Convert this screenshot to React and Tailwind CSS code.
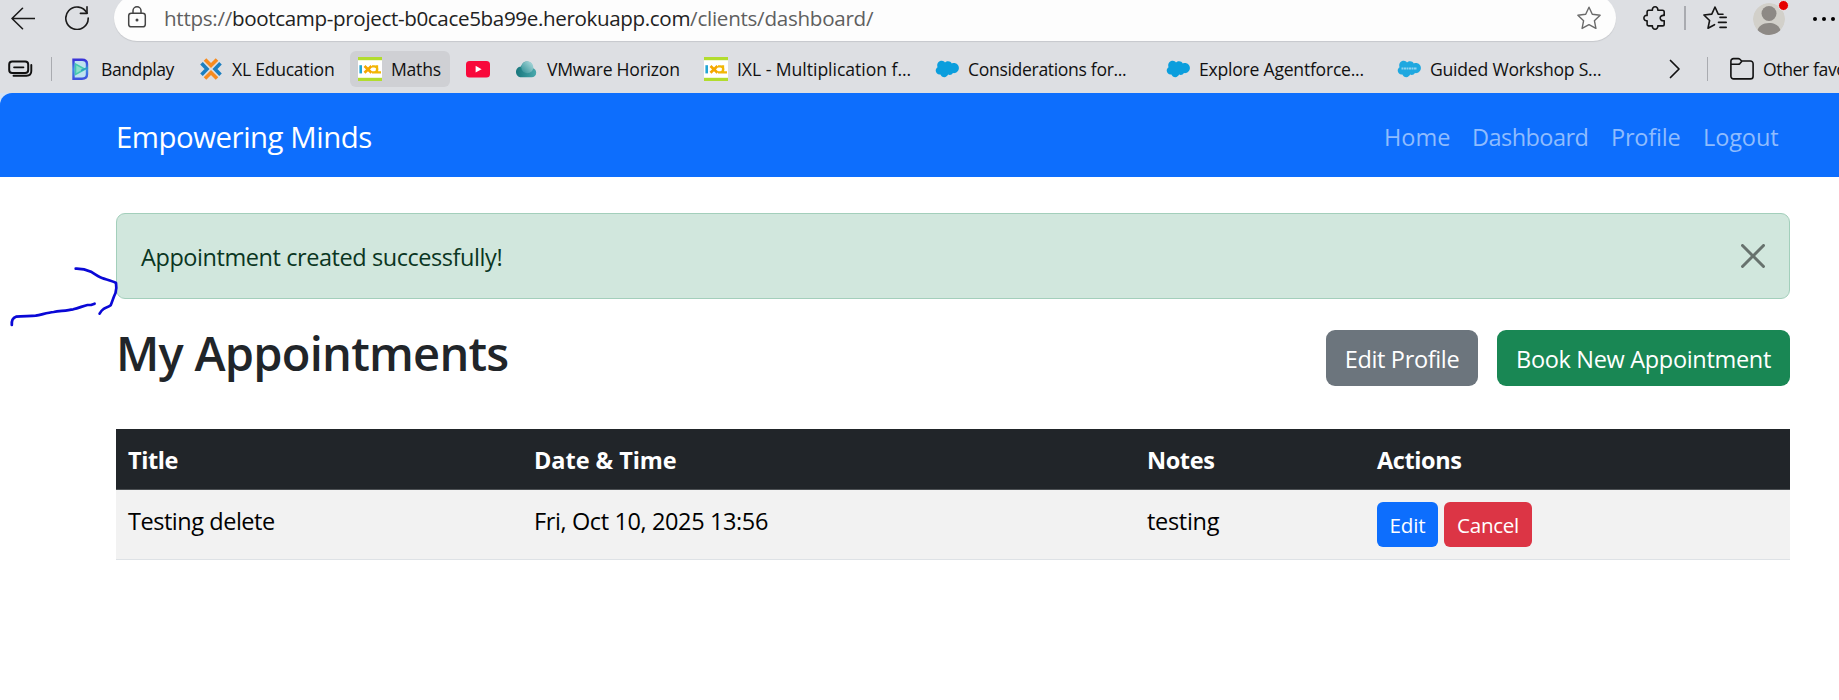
import React from "react";

function BackIcon() {
  return (
    <svg className="h-6 w-6" viewBox="0 0 24 24" fill="none" stroke="#1b1b1b" strokeWidth="1.6" strokeLinecap="round" strokeLinejoin="round">
      <path d="M11.500 2.300 1 12.500l10.500 10.200M1 12.500h22.500" />
    </svg>
  );
}

function ReloadIcon() {
  return (
    <svg className="h-6 w-6" viewBox="0 0 24 24" fill="none" stroke="#1b1b1b" strokeWidth="1.6" strokeLinecap="round" strokeLinejoin="round">
      <path d="M22 7.200A11.200 11.200 0 1 0 23.200 12" />
      <path d="M22 .8v6.600h-6.600" />
    </svg>
  );
}

function LockIcon() {
  return (
    <svg className="h-[22px] w-[20px]" viewBox="0 0 20 22" fill="none" stroke="#444" strokeWidth="1.5" strokeLinecap="round">
      <rect x="1.700" y="7.200" width="16.600" height="13.600" rx="2.600" />
      <path d="M6 7V4.800a4 4 0 0 1 8 0V7" />
      <circle cx="10" cy="14" r="1.500" fill="#444" stroke="none" />
    </svg>
  );
}

function StarIcon() {
  return (
    <svg className="h-6 w-6" viewBox="0 0 24 24" fill="none" stroke="#6a6a6a" strokeWidth="1.4" strokeLinejoin="round">
      <path d="M12 1.200 15.300 8.300l7.800 1-5.700 5.400 1.500 7.700L12 18.600l-6.900 3.800 1.500-7.700L.9 9.300l7.800-1z" />
    </svg>
  );
}

function ExtensionsIcon() {
  return (
    <svg className="h-6 w-6" viewBox="0 0 24 24" fill="none" stroke="#151515" strokeWidth="1.6" strokeLinejoin="round">
      <path d="M5.800 4.200h3.600C9.200 2.200 10.400.8 12.100.8s2.900 1.400 2.700 3.400h4.700a1.700 1.700 0 0 1 1.700 1.700v3.600c-2.500-.4-4 .8-4 2.600s1.500 3 4 2.600v3.500a1.700 1.700 0 0 1-1.700 1.700h-4.700c.2 2-1 3.300-2.700 3.300s-2.900-1.300-2.700-3.300H5.800a1.700 1.700 0 0 1-1.700-1.700v-3.500C2.100 15.100.9 13.800.9 12.100s1.200-3 3.200-2.600V5.900a1.700 1.700 0 0 1 1.700-1.700z" />
    </svg>
  );
}

function FavoritesIcon() {
  return (
    <svg className="h-6 w-6" viewBox="0 0 24 24" fill="none" stroke="#151515" strokeWidth="1.6" strokeLinecap="round" strokeLinejoin="round">
      <path d="M20 8.300 15.200 8.100 12 1 8.800 8.100.9 9l5.700 5.500L5 22.200l6.500-3.500" />
      <path d="M17 12h6.200M15.500 17h7.700M17 22h6.200" transform="translate(0 -.6)" />
    </svg>
  );
}

function Avatar() {
  return (
    <div className="relative h-8 w-8">
      <svg className="h-8 w-8" viewBox="0 0 32 32">
        <clipPath id="avatar-clip"><circle cx="16" cy="16" r="16" /></clipPath>
        <g clipPath="url(#avatar-clip)">
          <circle cx="16" cy="16" r="16" fill="#d2d0ca" />
          <circle cx="16" cy="10.500" r="7.500" fill="#8d8985" />
          <path d="M4 29c1-6 6-9 12-9s11 3 12 9l-6 6H10z" fill="#8d8985" />
        </g>
      </svg>
      <span className="absolute -top-[3px] right-[-4px] h-[11px] w-[11px] rounded-full border border-[#e6e8ec] bg-[#e60000]" />
    </div>
  );
}

function WorkspacesIcon() {
  return (
    <svg className="h-[18px] w-[26px]" viewBox="0 0 26 18" fill="none" stroke="#111" strokeLinecap="round">
      <rect x="1.200" y="1.500" width="19" height="11.600" rx="3" strokeWidth="2" />
      <path d="M6 7.300h9.500" strokeWidth="1.700" />
      <path d="M5.500 15.800h13c3 0 4.800-1.900 4.800-4.700V5" strokeWidth="1.900" />
    </svg>
  );
}

function BandplayIcon() {
  return (
    <svg className="h-6 w-6" viewBox="0 0 24 24" fill="none">
      <defs>
        <linearGradient id="bandplay" x1="0" y1="0" x2="0" y2="1">
          <stop offset="0" stopColor="#3a33d8" />
          <stop offset=".5" stopColor="#3f8be6" />
          <stop offset="1" stopColor="#3d52dd" />
        </linearGradient>
      </defs>
      <path d="M5.500 2.800H14c3.500 0 5 1.700 5 4.300v10.100c0 3.300-1.500 4.500-5 4.500H5.500z" stroke="url(#bandplay)" strokeWidth="2.400" fill="#bfe3ef" />
      <path d="M7.500 7v10.500l9.500-5.200z" stroke="#45c9b0" strokeWidth="1.600" fill="#8be0c9" />
      <path d="M13 13.500l7-3" stroke="#2e9fc4" strokeWidth="1.400" />
    </svg>
  );
}

function XlIcon() {
  return (
    <svg className="h-6 w-6" viewBox="0 0 24 24" fill="none" strokeWidth="3.600">
      <path d="M6 2.500l6 6 6-6M6 21.500l6-6 6 6" stroke="#f68b1f" />
      <path d="M2.500 6.300l5.500 5.700-5.500 5.700M21.500 6.300L16 12l5.500 5.700" stroke="#1b7fc0" />
    </svg>
  );
}

function IxlIcon() {
  return (
    <svg className="h-6 w-6" viewBox="0 0 24 24" fill="none">
      <rect width="24" height="24" fill="#fff" />
      <rect width="24" height="3.200" fill="#b2dc2e" />
      <rect y="20.800" width="24" height="3.200" fill="#b2dc2e" />
      <path d="M2.700 8.200v8.200" stroke="#22a5d4" strokeWidth="2.600" />
      <path d="M6.500 9l7 6.700M13.500 9l-7 6.700" stroke="#f5a800" strokeWidth="2.700" />
      <path d="M14 9.300h2.300a3 3 0 0 1 0 6H14M19 8.200v7.100h4" stroke="#f2b705" strokeWidth="2.300" />
    </svg>
  );
}

function YoutubeIcon() {
  return (
    <svg className="h-6 w-6" viewBox="0 0 24 24">
      <rect y="4" width="24" height="16.600" rx="3.600" fill="#f8093b" />
      <path d="M9.600 8.800v6.800l6-3.400z" fill="#fff" />
    </svg>
  );
}

function HorizonIcon() {
  return (
    <svg className="h-6 w-6" viewBox="0 0 24 24">
      <defs>
        <linearGradient id="horizon-a" x1="0" y1="0" x2="1" y2="0">
          <stop offset="0" stopColor="#17767c" />
          <stop offset="1" stopColor="#4aa9ad" />
        </linearGradient>
        <linearGradient id="horizon-b" x1="0" y1="1" x2="1" y2="0">
          <stop offset="0" stopColor="#2b8d93" />
          <stop offset="1" stopColor="#b5dfe1" />
        </linearGradient>
      </defs>
      <path d="M7.500 20.300C4.300 20.300 2 18 2 15s2-5.300 5-5.600C8 6.500 10 4.500 13 4.500c4 0 6 3 5.600 6.600 2.300.6 3.600 2.400 3.600 4.600 0 2.800-2 4.600-4.600 4.600z" fill="url(#horizon-a)" />
      <circle cx="13.300" cy="10.300" r="6" fill="url(#horizon-b)" />
    </svg>
  );
}

function SalesforceIcon({ wordmark }) {
  return (
    <svg className="h-6 w-6" viewBox="0 0 24 24">
      <path d="M10 5.500c.8-.8 1.900-1.300 3.100-1.300 1.600 0 3 .9 3.700 2.200.7-.3 1.400-.4 2.100-.4 2.800 0 5 2.300 5 5.100s-2.200 5.100-5 5.100c-.3 0-.7 0-1-.1-.6 1.200-1.800 1.900-3.200 1.900-.6 0-1.100-.1-1.600-.4-.6 1.500-2.100 2.600-3.800 2.600-1.800 0-3.300-1.100-3.900-2.700-.3.100-.5.100-.8.100-2.200 0-3.900-1.800-3.900-4 0-1.500.8-2.700 1.900-3.400-.2-.6-.4-1.200-.4-1.800C2.200 5.900 4.300 3.800 6.900 3.800c1.300 0 2.400.7 3.100 1.700z" fill={wordmark ? "#1fa8e0" : "#0b9edd"} />
      {wordmark && <path d="M4.500 11.500h15.500" stroke="#8fd3ef" strokeWidth="2" strokeDasharray="2 .5" />}
    </svg>
  );
}

function FolderIcon() {
  return (
    <svg className="h-6 w-6" viewBox="0 0 24 24" fill="none" stroke="#111" strokeWidth="1.600" strokeLinejoin="round">
      <path d="M.9 4.200A2.600 2.600 0 0 1 3.500 1.600h4.700c.7 0 1.300.3 1.700.7l1.700 1.700h8.800a2.700 2.700 0 0 1 2.700 2.700v12.500a2.700 2.700 0 0 1-2.700 2.700H3.600a2.700 2.700 0 0 1-2.700-2.700z" />
      <path d="M1 7.300h7.200c.7 0 1.300-.3 1.700-.7l2-2.400" />
    </svg>
  );
}

function Bookmark({ icon, label, className, active }) {
  return (
    <div className={"relative flex h-9 shrink-0 items-center gap-[9px] " + className}>
      {active && <span className="absolute inset-y-0 -left-2 w-[100px] rounded-md bg-[#cfd0d4]" />}
      <span className="relative shrink-0">{icon}</span>
      {label && <span className="relative whitespace-nowrap">{label}</span>}
    </div>
  );
}

function Browser() {
  return (
    <header className="h-[93px] overflow-hidden bg-[#dddfe3] text-[17.6px] text-[#111]">
      <div className="-mt-[5px] flex h-[46px] items-center">
        <div className="ml-[11px]"><BackIcon /></div>
        <div className="ml-[30px]"><ReloadIcon /></div>
        <div className="ml-[25px] flex h-[46px] w-[1502px] shrink-0 items-center rounded-full bg-[#fdfdfd] pl-[13px] pr-[15px] shadow-[0_1px_1px_#c6c8cc]">
          <span className="-mt-0.5"><LockIcon /></span>
          <div className="ml-[17px] whitespace-nowrap text-[20.6px] text-[#5f5f5f]">
            <span className="tracking-[-0.28px]">https://</span>
            <span className="tracking-[-0.36px] text-[#222]">bootcamp-project-b0cace5ba99e.herokuapp.com</span>
            <span className="tracking-[-0.27px]">/clients/dashboard/</span>
          </div>
          <div className="ml-auto"><StarIcon /></div>
        </div>
        <div className="ml-[27px]"><ExtensionsIcon /></div>
        <div className="ml-[17px] h-6 w-[2px] bg-[#a9abb0]" />
        <div className="ml-[17px]"><FavoritesIcon /></div>
        <div className="ml-[26px] mt-0.5"><Avatar /></div>
        <div className="ml-[28px] mt-[1px] flex shrink-0 gap-[5px]">
          <span className="h-1 w-1 rounded-full bg-black" />
          <span className="h-1 w-1 rounded-full bg-black" />
          <span className="h-1 w-1 rounded-full bg-black" />
        </div>
      </div>
      <div className="mt-[10px] flex h-9 items-center whitespace-nowrap">
        <div className="w-[51px] shrink-0 pl-2"><WorkspacesIcon /></div>
        <div className="mr-[16px] h-6 w-px shrink-0 bg-[#a9abb0]" />
        <Bookmark className="w-[131px] tracking-[-0.45px]" icon={<BandplayIcon />} label="Bandplay" />
        <Bookmark className="w-[159px] tracking-[-0.26px]" icon={<XlIcon />} label="XL Education" />
        <Bookmark className="w-[108px] tracking-[-0.24px]" icon={<IxlIcon />} label="Maths" active />
        <Bookmark className="w-[48px]" icon={<YoutubeIcon />} />
        <Bookmark className="w-[190px] tracking-[-0.25px]" icon={<HorizonIcon />} label="VMware Horizon" />
        <Bookmark className="w-[231px] tracking-[-0.04px]" icon={<IxlIcon />} label="IXL - Multiplication f..." />
        <Bookmark className="w-[231px] tracking-[-0.34px]" icon={<SalesforceIcon />} label="Considerations for..." />
        <Bookmark className="w-[231px] tracking-[-0.24px]" icon={<SalesforceIcon />} label="Explore Agentforce..." />
        <Bookmark className="w-[272px] tracking-[-0.23px]" icon={<SalesforceIcon wordmark />} label="Guided Workshop S..." />
        <svg className="h-5 w-3 shrink-0" viewBox="0 0 12 20" fill="none" stroke="#111" strokeWidth="1.700" strokeLinecap="round" strokeLinejoin="round">
          <path d="M1.500 1.500 10 10l-8.500 8.500" />
        </svg>
        <div className="ml-[26px] mr-[22px] h-6 w-px shrink-0 bg-[#a9abb0]" />
        <Bookmark className="tracking-[-0.4px]" icon={<FolderIcon />} label="Other favourites" />
      </div>
    </header>
  );
}

function Navbar() {
  return (
    <div className="bg-[#d3e2f5]">
      <nav className="flex h-[84px] items-center rounded-tl-xl bg-[#0d6efd] pl-[116px] pr-[60px] pt-[3px]">
        <a className="text-[29.4px] tracking-[-0.48px] text-white">Empowering Minds</a>
        <div className="ml-auto flex text-[23.5px] text-[#8fbcfe]">
          <a className="w-[88px]">Home</a>
          <a className="w-[139px] tracking-[-0.55px]">Dashboard</a>
          <a className="w-[92px] tracking-[-0.2px]">Profile</a>
          <a className="w-[76px] tracking-[-0.1px]">Logout</a>
        </div>
      </nav>
    </div>
  );
}

function Annotation() {
  return (
    <svg className="pointer-events-none absolute left-0 top-[260px] h-[70px] w-[125px]" viewBox="0 260 125 70" fill="none" stroke="#0a08d6" strokeWidth="2.700" strokeLinecap="round" strokeLinejoin="round">
      <path d="M75.700 268.700C82 268.500 86 269.500 91 271.700C96 275 99 277 102 278C106 279.500 112 280.500 116 283C116.800 287 116.200 290 115.500 293C113.500 297 112.500 301 110.700 305.300C108 307.500 105 307.500 103.500 309C101.500 310.500 100.500 312 99.600 313.700" />
      <path d="M11.800 325C11.500 321 12 318 16 316.700C23 315.700 30 316.500 35.700 315.700C42 314.500 48 312.500 53.600 312C60 311 67 310.500 73.200 309.300C79 308 83 306 87.500 305L91 305L94.600 303.700" />
    </svg>
  );
}

export default function App() {
  return (
    <div className="relative min-h-screen overflow-hidden bg-white font-['Open_Sans','Noto_Sans',sans-serif] leading-9">
      <Browser />
      <Navbar />
      <main className="w-[1790px] pl-[116px] pt-9 text-[23.5px]">
        <div className="flex h-[86px] items-start justify-between rounded-[9px] border border-[#a3cfbb] bg-[#d1e7dd] pl-6 pr-6 pt-[25px] text-[#0a3622]">
          <span className="tracking-[-0.43px]">Appointment created successfully!</span>
          <svg className="mt-[5px] h-6 w-6 opacity-50" viewBox="0 0 16 16" fill="#000">
            <path d="M.293.293a1 1 0 0 1 1.414 0L8 6.586 14.293.293a1 1 0 1 1 1.414 1.414L9.414 8l6.293 6.293a1 1 0 0 1-1.414 1.414L8 9.414l-6.293 6.293a1 1 0 0 1-1.414-1.414L6.586 8 .293 1.707a1 1 0 0 1 0-1.414z" />
          </svg>
        </div>
        <div className="mt-[25px] flex h-[105px] items-start justify-between">
          <h1 className="text-[47px] font-semibold leading-[58px] tracking-[-0.75px] text-[#212529]">My Appointments</h1>
          <div className="mt-1.5 flex gap-[19px] text-white">
            <button className="h-14 w-[152px] whitespace-nowrap rounded-[9px] bg-[#6c757d] pt-px tracking-[-0.35px]">Edit Profile</button>
            <button className="h-14 w-[293px] whitespace-nowrap rounded-[9px] bg-[#198754] pt-px tracking-[-0.32px]">Book New Appointment</button>
          </div>
        </div>
        <table className="w-full table-fixed border-separate border-spacing-0 text-left">
          <colgroup>
            <col className="w-[406px]" />
            <col className="w-[613px]" />
            <col className="w-[230px]" />
            <col />
          </colgroup>
          <thead>
            <tr className="h-[61px] bg-[#212529] align-top text-white">
              <th className="border-b border-[#4d5154] px-3 pt-[13px] font-bold tracking-[-0.4px]">Title</th>
              <th className="border-b border-[#4d5154] px-3 pt-[13px] font-bold tracking-[-0.05px]">Date &amp; Time</th>
              <th className="border-b border-[#4d5154] px-3 pt-[13px] font-bold tracking-[-0.4px]">Notes</th>
              <th className="border-b border-[#4d5154] px-3 pt-[13px] font-bold tracking-[-0.4px]">Actions</th>
            </tr>
          </thead>
          <tbody>
            <tr className="h-[70px] bg-[#f2f2f2] align-top text-black">
              <td className="border-b border-[#dee2e6] px-3 pt-[13px] tracking-[-0.46px]">Testing delete</td>
              <td className="border-b border-[#dee2e6] px-3 pt-[13px] tracking-[-0.38px]">Fri, Oct 10, 2025 13:56</td>
              <td className="border-b border-[#dee2e6] px-3 pt-[13px] tracking-[-0.3px]">testing</td>
              <td className="border-b border-[#dee2e6] px-3 pt-3">
                <div className="flex gap-1.5 text-[20.6px] text-white">
                  <button className="h-[45px] w-[61px] rounded-md bg-[#0d6efd] tracking-[-0.2px]">Edit</button>
                  <button className="h-[45px] w-[88px] rounded-md bg-[#dc3545] tracking-[-0.3px]">Cancel</button>
                </div>
              </td>
            </tr>
          </tbody>
        </table>
      </main>
      <Annotation />
    </div>
  );
}
